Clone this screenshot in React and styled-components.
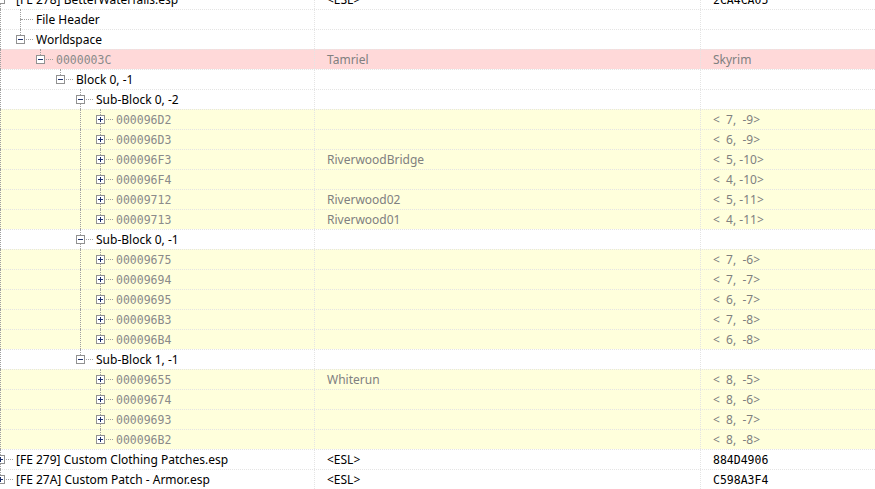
import styled, { createGlobalStyle } from "styled-components";

const GlobalStyle = createGlobalStyle`
  html, body {
    margin: 0;
    padding: 0;
    background: #ffffff;
    overflow: hidden;
  }
  body {
    font-family: "Segoe UI", "Noto Sans", sans-serif;
    font-size: 12px;
  }
`;

const grid = "#e4e4e4";
const treeLine = "#a0a0a0";

// collapsed cell record
const rec = (id, name, coords) => ({ id, name, coords, record: true, closed: true });

// plugin tree, already expanded down to the cell records
const tree = [
  {
    label: "[FE 278] BetterWaterfalls.esp",
    col2: "<ESL>",
    col3: "2CA4CA05",
    mono3: true,
    open: true,
    children: [
      { label: "File Header" },
      {
        label: "Worldspace",
        open: true,
        children: [
          {
            id: "0000003C",
            name: "Tamriel",
            col3: "Skyrim",
            record: true,
            open: true,
            tone: "pink",
            children: [
              {
                label: "Block 0, -1",
                open: true,
                children: [
                  {
                    label: "Sub-Block 0, -2",
                    open: true,
                    kids: "yellow",
                    children: [
                      rec("000096D2", "", "<  7,  -9>"),
                      rec("000096D3", "", "<  6,  -9>"),
                      rec("000096F3", "RiverwoodBridge", "<  5, -10>"),
                      rec("000096F4", "", "<  4, -10>"),
                      rec("00009712", "Riverwood02", "<  5, -11>"),
                      rec("00009713", "Riverwood01", "<  4, -11>"),
                    ],
                  },
                  {
                    label: "Sub-Block 0, -1",
                    open: true,
                    kids: "yellow",
                    children: [
                      rec("00009675", "", "<  7,  -6>"),
                      rec("00009694", "", "<  7,  -7>"),
                      rec("00009695", "", "<  6,  -7>"),
                      rec("000096B3", "", "<  7,  -8>"),
                      rec("000096B4", "", "<  6,  -8>"),
                    ],
                  },
                  {
                    label: "Sub-Block 1, -1",
                    open: true,
                    kids: "yellow",
                    children: [
                      rec("00009655", "Whiterun", "<  8,  -5>"),
                      rec("00009674", "", "<  8,  -6>"),
                      rec("00009693", "", "<  8,  -7>"),
                      rec("000096B2", "", "<  8,  -8>"),
                    ],
                  },
                ],
              },
            ],
          },
        ],
      },
    ],
  },
  { label: "[FE 279] Custom Clothing Patches.esp", col2: "<ESL>", col3: "884D4906", mono3: true, closed: true },
  { label: "[FE 27A] Custom Patch - Armor.esp", col2: "<ESL>", col3: "C598A3F4", mono3: true, closed: true },
];

function flatten(nodes, level = 0, rails = [], tone = null, out = []) {
  nodes.forEach((node, i) => {
    const hasNext = i < nodes.length - 1;
    const first = level === 0 && i === 0;
    out.push({ ...node, level, rails, hasNext, first, tone: node.tone || tone });
    if (node.children) {
      flatten(node.children, level + 1, [...rails, hasNext], node.kids || null, out);
    }
  });
  return out;
}

const rows = flatten(tree);

const View = styled.div`
  width: 875px;
  height: 489px;
  overflow: hidden;
`;

const List = styled.div`
  margin-top: -11px;
`;

const backgrounds = { pink: "#ffd9d9", yellow: "#ffffdc" };

const Row = styled.div`
  display: flex;
  height: 20px;
  box-sizing: border-box;
  border-top: 1px dotted ${grid};
  background: ${(p) => backgrounds[p.$tone] || "#ffffff"};
`;

const NameCell = styled.div`
  width: 314px;
  flex: none;
  display: flex;
  align-items: center;
  overflow: visible;
`;

const Tree = styled.div`
  display: flex;
  align-items: center;
  height: 19px;
  margin-left: -10px;
`;

const Rail = styled.span`
  position: relative;
  width: 20px;
  height: 19px;
  flex: none;

  &::before {
    content: "";
    display: ${(p) => (p.$on ? "block" : "none")};
    position: absolute;
    left: 10px;
    top: -1px;
    height: 20px;
    border-left: 1px dotted ${treeLine};
  }
`;

const Joint = styled.span`
  position: relative;
  width: 20px;
  height: 19px;
  flex: none;
`;

const Stem = styled.span`
  position: absolute;
  left: 10px;
  top: ${(p) => (p.$down ? "9px" : "-1px")};
  height: 10px;
  border-left: 1px dotted ${treeLine};
`;

const Branch = styled.span`
  position: absolute;
  left: 11px;
  top: 9px;
  width: 12px;
  border-top: 1px dotted ${treeLine};
`;

const Toggle = styled.svg`
  position: absolute;
  left: 6px;
  top: 5px;
`;

const Label = styled.span`
  margin-left: 6px;
  white-space: nowrap;
  color: ${(p) => (p.$record ? "#8a8a8a" : "#000000")};
  font-family: ${(p) =>
    p.$record ? '"DejaVu Sans Mono", "Liberation Mono", monospace' : 'inherit'};
  font-size: ${(p) => (p.$record ? "11.5px" : "12px")};
`;

const Cell = styled.div`
  display: flex;
  align-items: center;
  box-sizing: border-box;
  border-left: 1px dotted ${grid};
  padding-left: 12px;
  white-space: pre;
  color: ${(p) => (p.$dim ? "#808080" : "#000000")};
  font-family: ${(p) =>
    p.$mono ? '"DejaVu Sans Mono", "Liberation Mono", monospace' : 'inherit'};
  font-size: ${(p) => (p.$mono ? "11.5px" : "12px")};
  ${(p) => (p.$grow ? "flex: 1;" : "width: 386px; flex: none;")}
`;

function ToggleBox({ open }) {
  return (
    <Toggle width="9" height="9" viewBox="0 0 9 9">
      <rect x="0.5" y="0.5" width="8" height="8" fill="#ffffff" stroke="#919191" />
      <line x1="2" y1="4.5" x2="7" y2="4.5" stroke="#1d2f6b" />
      {!open && <line x1="4.5" y1="2" x2="4.5" y2="7" stroke="#1d2f6b" />}
    </Toggle>
  );
}

function TreeRow({ row }) {
  const expandable = row.children || row.closed;
  const dim = row.record;
  return (
    <Row $tone={row.tone}>
      <NameCell>
        <Tree>
          {row.rails.map((on, k) => (
            <Rail key={k} $on={on} />
          ))}
          <Joint>
            {!row.first && <Stem />}
            {row.hasNext && <Stem $down />}
            <Branch />
            {expandable && <ToggleBox open={row.open} />}
          </Joint>
          <Label $record={row.record}>{row.record ? row.id : row.label}</Label>
        </Tree>
      </NameCell>
      <Cell $dim={dim}>{row.record ? row.name : row.col2 || ""}</Cell>
      <Cell $grow $dim={dim} $mono={row.mono3}>
        {row.record ? row.col3 || row.coords : row.col3 || ""}
      </Cell>
    </Row>
  );
}

export default function App() {
  return (
    <View>
      <GlobalStyle />
      <List>
        {rows.map((row, i) => (
          <TreeRow key={i} row={row} />
        ))}
      </List>
    </View>
  );
}
